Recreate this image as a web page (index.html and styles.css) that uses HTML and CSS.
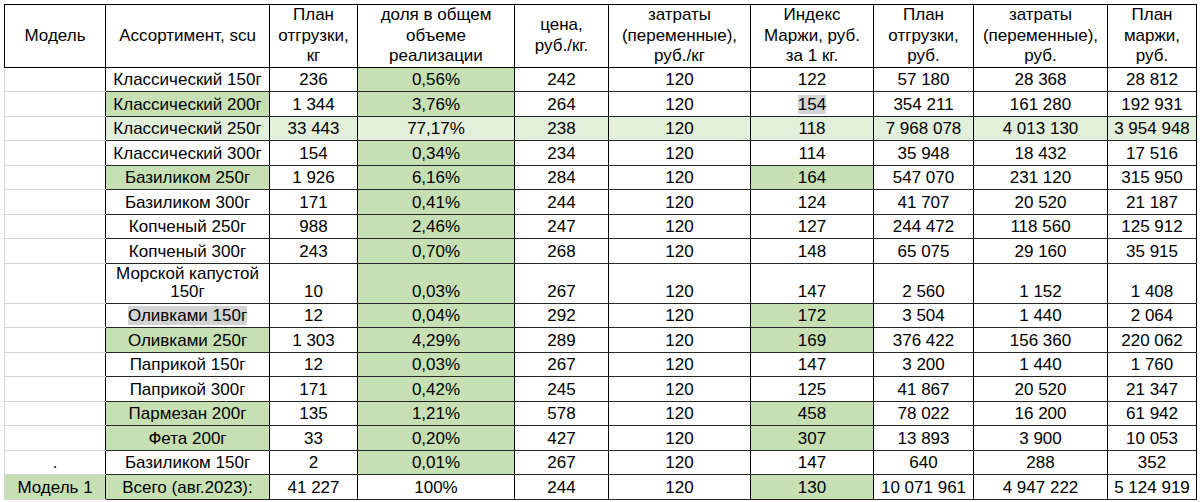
FILE: index.html
```html
<!DOCTYPE html>
<html lang="ru">
<head>
<meta charset="utf-8">
<title>План</title>
<link rel="stylesheet" href="styles.css">
</head>
<body>
<div class="wrap">
<table class="sheet">
<colgroup>
<col class="c1"><col class="c2"><col class="c3"><col class="c4"><col class="c5">
<col class="c6"><col class="c7"><col class="c8"><col class="c9"><col class="c10">
</colgroup>
<thead>
<tr class="head">
<th>Модель</th>
<th>Ассортимент, scu</th>
<th>План<br>отгрузки,<br>кг</th>
<th>доля в общем<br>объеме<br>реализации</th>
<th>цена,<br>руб./кг.</th>
<th>затраты<br>(переменные),<br>руб./кг</th>
<th>Индекс<br>Маржи, руб.<br>за 1 кг.</th>
<th>План<br>отгрузки,<br>руб.</th>
<th>затраты<br>(переменные),<br>руб.</th>
<th>План<br>маржи,<br>руб.</th>
</tr>
</thead>
<tbody>
<tr class="r"><td class="m"></td><td>Классический 150г</td><td>236</td><td class="g">0,56%</td><td>242</td><td>120</td><td>122</td><td>57 180</td><td>28 368</td><td>28 812</td></tr>
<tr class="r"><td class="m"></td><td class="g">Классический 200г</td><td>1 344</td><td class="g">3,76%</td><td>264</td><td>120</td><td><span class="hl">154</span></td><td>354 211</td><td>161 280</td><td>192 931</td></tr>
<tr class="r lite"><td class="m"></td><td>Классический 250г</td><td>33 443</td><td>77,17%</td><td>238</td><td>120</td><td>118</td><td>7 968 078</td><td>4 013 130</td><td>3 954 948</td></tr>
<tr class="r"><td class="m"></td><td>Классический 300г</td><td>154</td><td class="g">0,34%</td><td>234</td><td>120</td><td>114</td><td>35 948</td><td>18 432</td><td>17 516</td></tr>
<tr class="r"><td class="m"></td><td class="g">Базиликом 250г</td><td>1 926</td><td class="g">6,16%</td><td>284</td><td>120</td><td class="g">164</td><td>547 070</td><td>231 120</td><td>315 950</td></tr>
<tr class="r"><td class="m"></td><td>Базиликом 300г</td><td>171</td><td class="g">0,41%</td><td>244</td><td>120</td><td>124</td><td>41 707</td><td>20 520</td><td>21 187</td></tr>
<tr class="r"><td class="m"></td><td>Копченый 250г</td><td>988</td><td class="g">2,46%</td><td>247</td><td>120</td><td>127</td><td>244 472</td><td>118 560</td><td>125 912</td></tr>
<tr class="r"><td class="m"></td><td>Копченый 300г</td><td>243</td><td class="g">0,70%</td><td>268</td><td>120</td><td>148</td><td>65 075</td><td>29 160</td><td>35 915</td></tr>
<tr class="t"><td class="m"></td><td class="wrapcell">Морской капустой<br>150г</td><td>10</td><td class="g">0,03%</td><td>267</td><td>120</td><td>147</td><td>2 560</td><td>1 152</td><td>1 408</td></tr>
<tr class="r"><td class="m"></td><td><span class="hl">Оливками 150г</span></td><td>12</td><td class="g">0,04%</td><td>292</td><td>120</td><td class="g">172</td><td>3 504</td><td>1 440</td><td>2 064</td></tr>
<tr class="r"><td class="m"></td><td class="g">Оливками 250г</td><td>1 303</td><td class="g">4,29%</td><td>289</td><td>120</td><td class="g">169</td><td>376 422</td><td>156 360</td><td>220 062</td></tr>
<tr class="r"><td class="m"></td><td>Паприкой 150г</td><td>12</td><td class="g">0,03%</td><td>267</td><td>120</td><td>147</td><td>3 200</td><td>1 440</td><td>1 760</td></tr>
<tr class="r"><td class="m"></td><td>Паприкой 300г</td><td>171</td><td class="g">0,42%</td><td>245</td><td>120</td><td>125</td><td>41 867</td><td>20 520</td><td>21 347</td></tr>
<tr class="r"><td class="m"></td><td class="g">Пармезан 200г</td><td>135</td><td class="g">1,21%</td><td>578</td><td>120</td><td class="g">458</td><td>78 022</td><td>16 200</td><td>61 942</td></tr>
<tr class="r"><td class="m"></td><td class="g">Фета 200г</td><td>33</td><td class="g">0,20%</td><td>427</td><td>120</td><td class="g">307</td><td>13 893</td><td>3 900</td><td>10 053</td></tr>
<tr class="r"><td class="m">.</td><td>Базиликом 150г</td><td>2</td><td class="g">0,01%</td><td>267</td><td>120</td><td>147</td><td>640</td><td>288</td><td>352</td></tr>
<tr class="r last"><td class="m g">Модель 1</td><td class="g">Всего (авг.2023):</td><td>41 227</td><td>100%</td><td>244</td><td>120</td><td class="g">130</td><td>10 071 961</td><td>4 947 222</td><td>5 124 919</td></tr>
</tbody>
</table>
</div>
</body>
</html>
```

FILE: styles.css
```css
html, body {
  margin: 0;
  padding: 0;
  background: #ffffff;
}
body {
  font-family: "Liberation Sans", Arial, sans-serif;
  font-size: 17px;
  color: #000000;
}
.wrap {
  padding: 4px 0 0 4px;
}
.sheet {
  border-collapse: collapse;
  table-layout: fixed;
  width: 1192px;
}
.c1 { width: 101px; }
.c2 { width: 164px; }
.c3 { width: 88px; }
.c4 { width: 157px; }
.c5 { width: 94px; }
.c6 { width: 142px; }
.c7 { width: 123px; }
.c8 { width: 100px; }
.c9 { width: 134px; }
.c10 { width: 89px; }

.sheet th,
.sheet td {
  border: 1px solid #000000;
  text-align: center;
  padding: 0 1px 2px;
  white-space: nowrap;
  overflow: hidden;
}
.sheet th {
  font-weight: normal;
  vertical-align: middle;
  line-height: 20.5px;
  padding: 0 1px;
}
.sheet td {
  vertical-align: bottom;
  line-height: 18px;
}
.head { height: 62px; }
.r { height: 24.5px; }
.t { height: 40px; }

.sheet tbody td {
  border-top-color: #262626;
  border-bottom-color: #262626;
}
.sheet td.m {
  border-top-color: #d4d4d4;
  border-bottom-color: #d4d4d4;
  border-left-color: #d4d4d4;
  border-right: none;
}
.sheet td.wrapcell {
  white-space: normal;
}
.g { background: #c6e0b4; }
.lite td { background: #e2efda; }
.lite td.m { background: #ffffff; }
.hl { background: #d4d4d4; }
```
